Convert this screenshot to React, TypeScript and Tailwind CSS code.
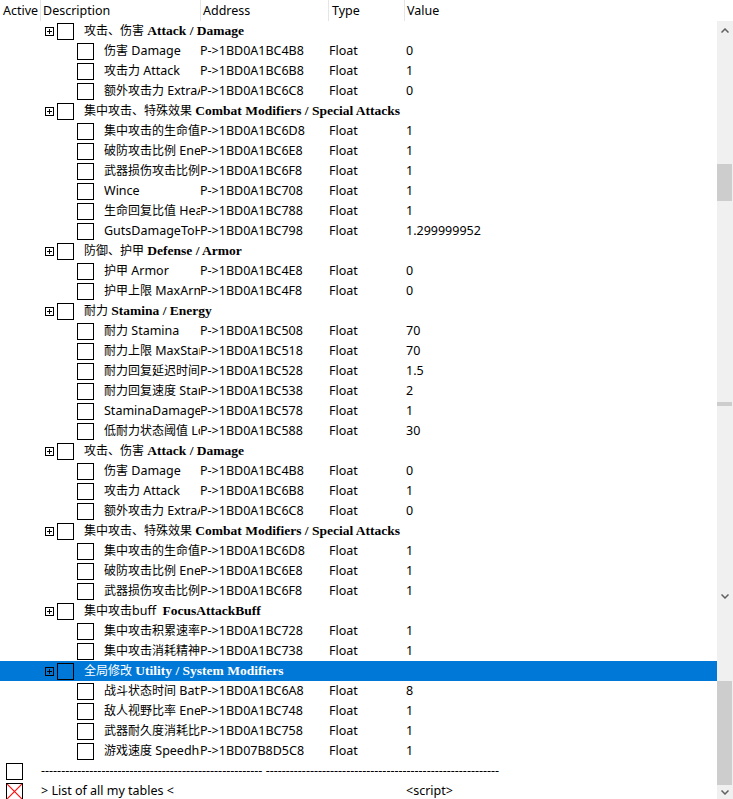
import { Fragment } from 'react'

type Row =
  | { t: 'g'; cn: string; en: string; sel?: boolean }
  | { t: 'i'; d: string; a: string; v: string }

const rows: Row[] = [
  { t: 'g', cn: '攻击、伤害 ', en: 'Attack / Damage' },
  { t: 'i', d: '伤害 Damage', a: 'P->1BD0A1BC4B8', v: '0' },
  { t: 'i', d: '攻击力 Attack', a: 'P->1BD0A1BC6B8', v: '1' },
  { t: 'i', d: '额外攻击力 ExtraAttack', a: 'P->1BD0A1BC6C8', v: '0' },
  { t: 'g', cn: '集中攻击、特殊效果 ', en: 'Combat Modifiers / Special Attacks' },
  { t: 'i', d: '集中攻击的生命值 FocusHealth', a: 'P->1BD0A1BC6D8', v: '1' },
  { t: 'i', d: '破防攻击比例 EnemyGuardBreak', a: 'P->1BD0A1BC6E8', v: '1' },
  { t: 'i', d: '武器损伤攻击比例 WeaponDamage', a: 'P->1BD0A1BC6F8', v: '1' },
  { t: 'i', d: 'Wince', a: 'P->1BD0A1BC708', v: '1' },
  { t: 'i', d: '生命回复比值 HealthRegen', a: 'P->1BD0A1BC788', v: '1' },
  { t: 'i', d: 'GutsDamageToHealth', a: 'P->1BD0A1BC798', v: '1.299999952' },
  { t: 'g', cn: '防御、护甲 ', en: 'Defense / Armor' },
  { t: 'i', d: '护甲 Armor', a: 'P->1BD0A1BC4E8', v: '0' },
  { t: 'i', d: '护甲上限 MaxArmor', a: 'P->1BD0A1BC4F8', v: '0' },
  { t: 'g', cn: '耐力 ', en: 'Stamina / Energy' },
  { t: 'i', d: '耐力 Stamina', a: 'P->1BD0A1BC508', v: '70' },
  { t: 'i', d: '耐力上限 MaxStamina', a: 'P->1BD0A1BC518', v: '70' },
  { t: 'i', d: '耐力回复延迟时间 StaminaRegenDelay', a: 'P->1BD0A1BC528', v: '1.5' },
  { t: 'i', d: '耐力回复速度 StaminaRegen', a: 'P->1BD0A1BC538', v: '2' },
  { t: 'i', d: 'StaminaDamageMult', a: 'P->1BD0A1BC578', v: '1' },
  { t: 'i', d: '低耐力状态阈值 LowStamina', a: 'P->1BD0A1BC588', v: '30' },
  { t: 'g', cn: '攻击、伤害 ', en: 'Attack / Damage' },
  { t: 'i', d: '伤害 Damage', a: 'P->1BD0A1BC4B8', v: '0' },
  { t: 'i', d: '攻击力 Attack', a: 'P->1BD0A1BC6B8', v: '1' },
  { t: 'i', d: '额外攻击力 ExtraAttack', a: 'P->1BD0A1BC6C8', v: '0' },
  { t: 'g', cn: '集中攻击、特殊效果 ', en: 'Combat Modifiers / Special Attacks' },
  { t: 'i', d: '集中攻击的生命值 FocusHealth', a: 'P->1BD0A1BC6D8', v: '1' },
  { t: 'i', d: '破防攻击比例 EnemyGuardBreak', a: 'P->1BD0A1BC6E8', v: '1' },
  { t: 'i', d: '武器损伤攻击比例 WeaponDamage', a: 'P->1BD0A1BC6F8', v: '1' },
  { t: 'g', cn: '集中攻击buff  ', en: 'FocusAttackBuff' },
  { t: 'i', d: '集中攻击积累速率 FocusBuildRate', a: 'P->1BD0A1BC728', v: '1' },
  { t: 'i', d: '集中攻击消耗精神 FocusCost', a: 'P->1BD0A1BC738', v: '1' },
  { t: 'g', cn: '全局修改 ', en: 'Utility / System Modifiers', sel: true },
  { t: 'i', d: '战斗状态时间 BattleTime', a: 'P->1BD0A1BC6A8', v: '8' },
  { t: 'i', d: '敌人视野比率 EnemyVision', a: 'P->1BD0A1BC748', v: '1' },
  { t: 'i', d: '武器耐久度消耗比 Durability', a: 'P->1BD0A1BC758', v: '1' },
  { t: 'i', d: '游戏速度 Speedhack', a: 'P->1BD07B8D5C8', v: '1' },
]

const cjk = /([\u3000-\u303f\u4e00-\u9fff\uff00-\uffef]+)/

// CJK glyphs are a bit smaller than the latin ones in the original font
function Mixed({ s }: { s: string }) {
  return (
    <>
      {s.split(cjk).map((p, i) =>
        i % 2 ? (
          <span key={i} className="text-[12px]">{p}</span>
        ) : (
          <Fragment key={i}>{p}</Fragment>
        )
      )}
    </>
  )
}

function Box({ red }: { red?: boolean }) {
  return (
    <div className="w-[17px] h-[17px] shrink-0 border border-black">
      {red && (
        <svg width="15" height="15" viewBox="0 0 15 15" className="block">
          <path d="M0 0L15 15M15 0L0 15" stroke="#ff1010" strokeWidth="1.2" />
        </svg>
      )}
    </div>
  )
}

function Expander() {
  return (
    <svg width="9" height="9" viewBox="0 0 9 9" className="shrink-0" shapeRendering="crispEdges">
      <rect x="0.5" y="0.5" width="8" height="8" fill="none" stroke="#000" />
      <path d="M2 4.5H7M4.5 2V7" stroke="#000" />
    </svg>
  )
}

function Chevron({ up }: { up?: boolean }) {
  return (
    <svg width="8" height="5" viewBox="0 0 8 5">
      <path d={up ? 'M0.5 4.5L4 1L7.5 4.5' : 'M0.5 0.5L4 4L7.5 0.5'} fill="none" stroke="#606060" strokeWidth="1.5" />
    </svg>
  )
}

function GroupRow({ r }: { r: Extract<Row, { t: 'g' }> }) {
  return (
    <div
      className={`h-[20px] flex items-center pl-[45px] whitespace-pre ${
        r.sel ? 'bg-[#0078d7] text-white' : 'text-black'
      }`}
    >
      <Expander />
      <div className="ml-[3px]">
        <Box />
      </div>
      <span className="ml-[10px]">
        <Mixed s={r.cn} />
        <span className="font-['Liberation_Serif',serif] font-bold text-[13.5px]">{r.en}</span>
      </span>
    </div>
  )
}

function ItemRow({ r }: { r: Extract<Row, { t: 'i' }> }) {
  return (
    <div className="h-[20px] flex items-center pl-[77px] text-black whitespace-nowrap">
      <Box />
      <div className="ml-[10px] w-[96px] overflow-hidden">
        <Mixed s={r.d} />
      </div>
      <div className="w-[129px]">{r.a}</div>
      <div className="w-[77px]">Float</div>
      <div>{r.v}</div>
    </div>
  )
}

export default function App() {
  const dashA = '-'.repeat(55)
  const dashB = '-'.repeat(58)

  return (
    <div className="w-[733px] h-[799px] overflow-hidden bg-white flex font-['Noto_Sans','Noto_Sans_CJK_SC',sans-serif] text-[12.5px] leading-[20px] text-black">
      <div className="w-[717px] flex flex-col">
        {/* Column headers */}
        <div className="h-[21px] shrink-0 flex items-center">
          <div className="w-[41px] h-full pl-[3px] border-r border-[#e5e5e5] flex items-center">Active</div>
          <div className="w-[160px] h-full pl-[2px] border-r border-[#e5e5e5] flex items-center">Description</div>
          <div className="w-[128px] h-full pl-[2px] border-r border-[#e5e5e5] flex items-center">Address</div>
          <div className="w-[76px] h-full pl-[3px] border-r border-[#e5e5e5] flex items-center">Type</div>
          <div className="pl-[2px] h-full flex items-center">Value</div>
        </div>

        {/* Entries */}
        {rows.map((r, i) =>
          r.t === 'g' ? <GroupRow key={i} r={r} /> : <ItemRow key={i} r={r} />
        )}

        <div className="h-[20px] flex items-center pl-[6px] whitespace-pre">
          <Box />
          <span className="ml-[18px]">{dashA + ' ' + dashB}</span>
        </div>
        <div className="h-[20px] flex items-center pl-[6px] whitespace-nowrap">
          <Box red />
          <div className="ml-[18px] w-[159px]">&gt; List of all my tables &lt;</div>
          <div className="w-[129px]"></div>
          <div className="w-[77px]"></div>
          <div>&lt;script&gt;</div>
        </div>
      </div>

      {/* Scrollbar */}
      <div className="w-[16px] flex flex-col">
        <div className="h-[21px] shrink-0 bg-white"></div>
        <div className="flex-1 bg-[#f0f0f0] flex flex-col">
          <div className="h-[19px] flex items-center justify-center"><Chevron up /></div>
          <div className="h-[124px]"></div>
          <div className="h-[37px] mr-[1px] bg-[#cdcdcd]"></div>
          <div className="h-[201px]"></div>
          <div className="h-[4px] mr-[1px] bg-[#cdcdcd]"></div>
          <div className="h-[181px]"></div>
          <div className="h-[18px] flex items-center justify-center"><Chevron /></div>
          <div className="h-[76px]"></div>
          <div className="h-[104px] mr-[1px] bg-[#cdcdcd]"></div>
          <div className="h-[14px] flex items-center justify-center"><Chevron /></div>
        </div>
      </div>
    </div>
  )
}
